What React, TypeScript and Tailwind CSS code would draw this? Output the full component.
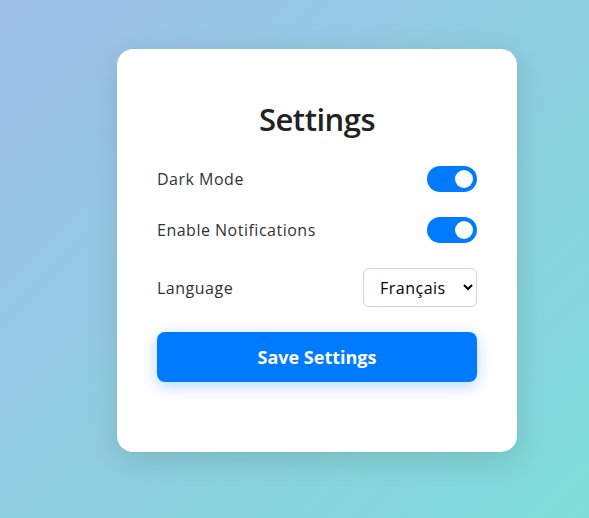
import React, { useState } from "react";

function Toggle({ on, onClick }: { on: boolean; onClick: () => void }) {
  return (
    <button
      onClick={onClick}
      className={`relative h-[26px] w-[50px] rounded-full ${on ? "bg-[#007bff]" : "bg-[#ccc]"}`}
    >
      <span
        className={`absolute top-[4px] h-[18px] w-[18px] rounded-full bg-white ${on ? "left-[28px]" : "left-[4px]"}`}
      />
    </button>
  );
}

export default function App() {
  const [dark, setDark] = useState(true);
  const [notif, setNotif] = useState(true);
  return (
    <div
      className="flex min-h-[518px] w-full items-start justify-start bg-[linear-gradient(135deg,#9fbfe8_0%,#7edcd8_100%)] pl-[117px] pt-[49px]"
      style={{ fontFamily: '"Open Sans", "Noto Sans", sans-serif' }}
    >
      <div className="w-[400px] rounded-[16px] bg-white px-[40px] pb-[70px] pt-[48px] shadow-[0_8px_30px_rgba(0,0,0,0.12)]">
        <h2 className="mb-[24px] text-center text-[31px] font-semibold leading-[45px] tracking-[-0.5px] text-[#222]">
          Settings
        </h2>
        <div className="mb-[25px] flex items-center justify-between">
          <span className="text-[16px] tracking-[0.5px] text-[#333]">Dark Mode</span>
          <Toggle on={dark} onClick={() => setDark(!dark)} />
        </div>
        <div className="mb-[25px] flex items-center justify-between">
          <span className="text-[16px] tracking-[0.5px] text-[#333]">Enable Notifications</span>
          <Toggle on={notif} onClick={() => setNotif(!notif)} />
        </div>
        <div className="mb-[25px] flex items-center justify-between">
          <span className="text-[16px] tracking-[0.5px] text-[#333]">Language</span>
          <select
            defaultValue="fr"
            className="h-[39px] w-[114px] rounded-[6px] border border-[#d4d4d4] bg-white pl-[12px] pr-[6px] text-[16px] tracking-[0.5px] text-black"
          >
            <option value="en">English</option>
            <option value="fr">Français</option>
            <option value="es">Español</option>
          </select>
        </div>
        <button className="h-[50px] w-full rounded-[8px] bg-[#007bff] text-[18px] font-bold text-white shadow-[0_4px_15px_rgba(0,123,255,0.3)]">
          Save Settings
        </button>
      </div>
    </div>
  );
}
